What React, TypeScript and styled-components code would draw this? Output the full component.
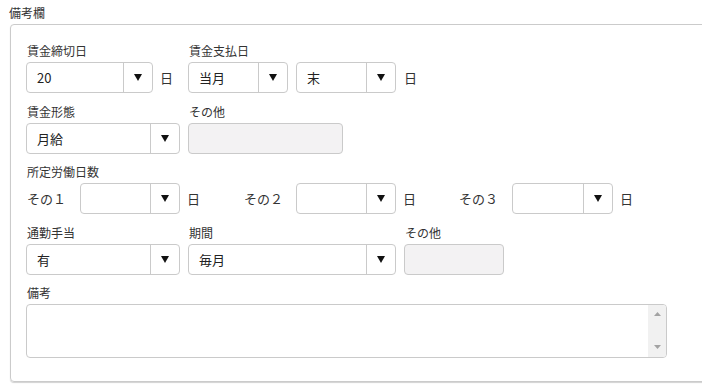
import React from "react";
import styled, { createGlobalStyle } from "styled-components";

const Global = createGlobalStyle`
  html, body { margin: 0; padding: 0; background: #fff; overflow: hidden; }
  body { font-family: "Noto Sans CJK JP", "Noto Sans", sans-serif; color: #333; }
`;

const Page = styled.div`
  width: 702px;
  height: 391px;
  overflow: hidden;
`;

const Title = styled.div`
  padding: 4px 0 0 9px;
  font-size: 12px;
  line-height: 18px;
  color: #333;
`;

const Panel = styled.div`
  margin: 2px 0 0 10px;
  width: 720px;
  box-sizing: border-box;
  border: 1px solid #cbcbcb;
  border-radius: 4px;
  box-shadow: 0 1px 1px rgba(0, 0, 0, 0.18);
  padding: 17px 0 23px 15px;
  display: flex;
  flex-direction: column;
  gap: 9.5px;
`;

const Row = styled.div<{ $center?: boolean }>`
  display: flex;
  align-items: ${(p) => (p.$center ? "center" : "flex-end")};
`;

const Field = styled.div<{ $ml?: number }>`
  display: flex;
  flex-direction: column;
  margin-left: ${(p) => p.$ml ?? 0}px;
`;

const Label = styled.div`
  font-size: 12px;
  line-height: 18px;
  margin-bottom: 2px;
  padding-left: 1px;
  color: #333;
  white-space: nowrap;
`;

const Inline = styled.div`
  display: flex;
  align-items: center;
  gap: 8px;
`;

const SelectBox = styled.div<{ $w: number }>`
  display: flex;
  width: ${(p) => p.$w}px;
  height: 31px;
  box-sizing: border-box;
  border: 1px solid #cacaca;
  border-radius: 4px;
  background: #fff;
  flex-shrink: 0;
`;

const SelectValue = styled.div`
  flex: 1;
  display: flex;
  align-items: center;
  padding-left: 10px;
  font-size: 13px;
  color: #222;
`;

const SelectArrow = styled.div`
  width: 28px;
  border-left: 1px solid #cacaca;
  display: flex;
  align-items: center;
  justify-content: center;
`;

const Unit = styled.div<{ $w: number; $pl?: number }>`
  width: ${(p) => p.$w}px;
  box-sizing: border-box;
  padding-left: ${(p) => p.$pl ?? 7}px;
  font-size: 13px;
  line-height: 31px;
  color: #333;
  flex-shrink: 0;
`;

const InlineLabel = styled.div<{ $w: number }>`
  width: ${(p) => p.$w}px;
  box-sizing: border-box;
  padding-left: 1px;
  font-size: 13px;
  line-height: 31px;
  color: #333;
  flex-shrink: 0;
  white-space: nowrap;
`;

const DisabledInput = styled.div<{ $w: number }>`
  width: ${(p) => p.$w}px;
  height: 31px;
  box-sizing: border-box;
  border: 1px solid #cacaca;
  border-radius: 4px;
  background: #f3f2f3;
`;

const TextAreaBox = styled.div`
  display: flex;
  width: 641px;
  height: 54px;
  box-sizing: border-box;
  border: 1px solid #cacaca;
  border-radius: 4px;
  background: #fff;
  overflow: hidden;
`;

const TextArea = styled.textarea`
  flex: 1;
  border: none;
  outline: none;
  resize: none;
  overflow: hidden;
  font-family: inherit;
  font-size: 13px;
  padding: 4px 8px;
  background: transparent;
`;

const ScrollBar = styled.div`
  width: 18px;
  background: #f1f1f1;
  display: flex;
  flex-direction: column;
  justify-content: space-between;
  align-items: center;
  padding: 7px 0 8px;
  box-sizing: border-box;
`;

const Arrow = () => (
  <svg width="8" height="7" viewBox="0 0 8 7">
    <polygon points="0,0 8,0 4,7" fill="#111" />
  </svg>
);

const ScrollTri = ({ up }: { up?: boolean }) => (
  <svg width="7" height="4" viewBox="0 0 7 4">
    <polygon points={up ? "0,4 7,4 3.5,0" : "0,0 7,0 3.5,4"} fill="#a3a3a3" />
  </svg>
);

const Select = ({ w, value }: { w: number; value?: string }) => (
  <SelectBox $w={w}>
    <SelectValue>{value}</SelectValue>
    <SelectArrow>
      <Arrow />
    </SelectArrow>
  </SelectBox>
);

export default function App() {
  return (
    <Page>
      <Global />
      <Title>備考欄</Title>
      <Panel>
        <Row>
          <Field>
            <Label>賃金締切日</Label>
            <Select w={127} value="20" />
          </Field>
          <Unit $w={35}>日</Unit>
          <Field>
            <Label>賃金支払日</Label>
            <Inline>
              <Select w={100} value="当月" />
              <Select w={100} value="末" />
              <Unit $w={30} $pl={0}>日</Unit>
            </Inline>
          </Field>
        </Row>
        <Row>
          <Field>
            <Label>賃金形態</Label>
            <Select w={154} value="月給" />
          </Field>
          <Field $ml={8}>
            <Label>その他</Label>
            <DisabledInput $w={155} />
          </Field>
        </Row>
        <Field>
          <Label>所定労働日数</Label>
          <Row $center>
            <InlineLabel $w={54}>その１</InlineLabel>
            <Select w={100} />
            <Unit $w={63}>日</Unit>
            <InlineLabel $w={53}>その２</InlineLabel>
            <Select w={100} />
            <Unit $w={62}>日</Unit>
            <InlineLabel $w={54}>その３</InlineLabel>
            <Select w={101} />
            <Unit $w={30}>日</Unit>
          </Row>
        </Field>
        <Row>
          <Field>
            <Label>通勤手当</Label>
            <Select w={154} value="有" />
          </Field>
          <Field $ml={8}>
            <Label>期間</Label>
            <Select w={208} value="毎月" />
          </Field>
          <Field $ml={8}>
            <Label>その他</Label>
            <DisabledInput $w={100} />
          </Field>
        </Row>
        <Field>
          <Label>備考</Label>
          <TextAreaBox>
            <TextArea />
            <ScrollBar>
              <ScrollTri up />
              <ScrollTri />
            </ScrollBar>
          </TextAreaBox>
        </Field>
      </Panel>
    </Page>
  );
}
